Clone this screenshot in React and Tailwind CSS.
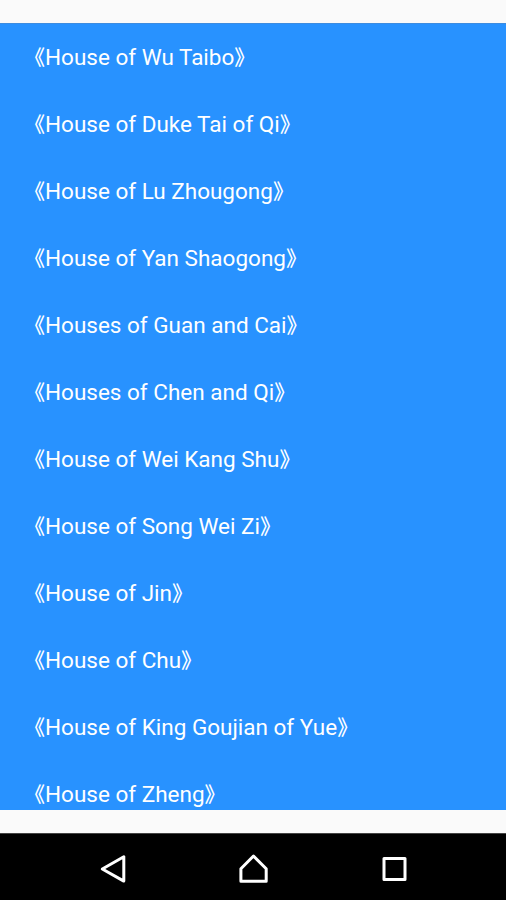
const houses = [
  'House of Wu Taibo',
  'House of Duke Tai of Qi',
  'House of Lu Zhougong',
  'House of Yan Shaogong',
  'Houses of Guan and Cai',
  'Houses of Chen and Qi',
  'House of Wei Kang Shu',
  'House of Song Wei Zi',
  'House of Jin',
  'House of Chu',
  'House of King Goujian of Yue',
  'House of Zheng',
];

function HouseRow({ title }) {
  return (
    <li className="flex h-[67px] shrink-0 items-baseline whitespace-nowrap pl-[45px] pt-4 text-[22.5px] leading-[34px] text-white">
      <span className="-ml-[21px] w-[21px] text-[21px] font-medium">《</span>
      <span>{title}</span>
      <span className="text-[21px] font-medium">》</span>
    </li>
  );
}

function NavBar() {
  return (
    <nav className="h-[67px] shrink-0 border-t border-[#444] bg-black">
      <svg className="block h-[66px] w-full" viewBox="0 1 506 66" fill="none" stroke="white" strokeWidth="3" strokeLinejoin="round">
        <path d="M123.800 23.800v24.300L102.300 36z" />
        <path d="M240.900 35.800 253.500 23l12.700 12.800V48.200h-25.300z" />
        <path d="M384 25.500h21v21h-21z" />
      </svg>
    </nav>
  );
}

export default function App() {
  return (
    <div className="flex h-[900px] w-[506px] flex-col overflow-hidden bg-[#fafafa] font-[Roboto,'Noto_Sans_CJK_SC',sans-serif]">
      <ul className="mt-[23px] flex h-[787px] shrink-0 flex-col overflow-hidden border-t border-[#3d8ce0] bg-[#2892ff]">
        {houses.map((title) => (
          <HouseRow key={title} title={title} />
        ))}
      </ul>
      <div className="flex-1" />
      <NavBar />
    </div>
  );
}
